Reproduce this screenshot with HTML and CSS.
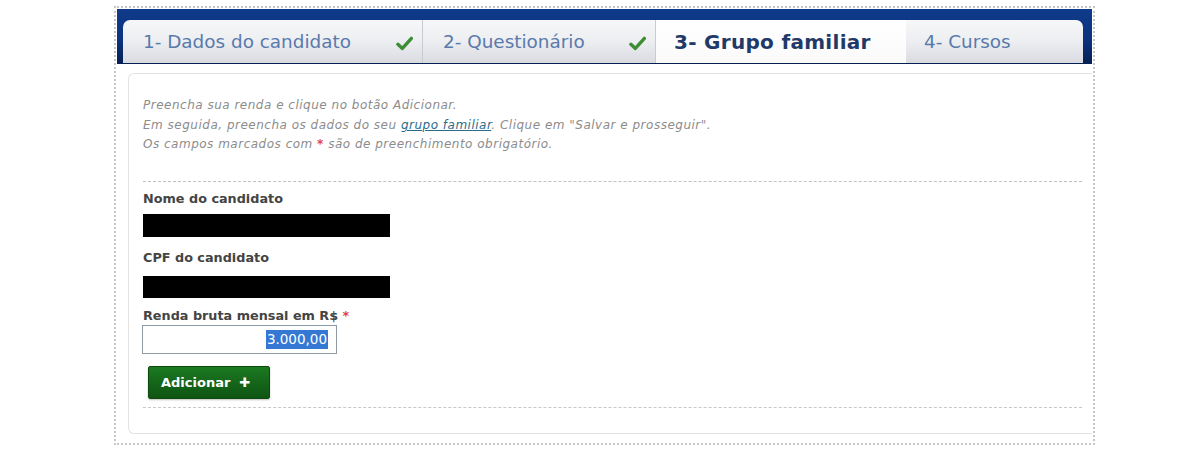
FILE: index.html
```html
<!DOCTYPE html>
<html lang="pt-BR">
<head>
<meta charset="utf-8">
<title>Grupo familiar</title>
<link rel="stylesheet" href="styles.css">
</head>
<body>
<div class="frame">
  <div class="tabbar">
    <div class="tab tab-first">
      <span class="tab-label">1- Dados do candidato</span>
      <svg class="check" viewBox="0 0 16 14" width="17" height="15"><path d="M1.8 7.8 L6 11.6 L14.5 2.2" fill="none" stroke="#3f8d36" stroke-width="3.2" stroke-linecap="round" stroke-linejoin="round"/></svg>
    </div>
    <div class="tab tab-second">
      <span class="tab-label">2- Questionário</span>
      <svg class="check" viewBox="0 0 16 14" width="17" height="15"><path d="M1.8 7.8 L6 11.6 L14.5 2.2" fill="none" stroke="#3f8d36" stroke-width="3.2" stroke-linecap="round" stroke-linejoin="round"/></svg>
    </div>
    <div class="tab tab-active">
      <span class="tab-label">3- Grupo familiar</span>
    </div>
    <div class="tab tab-last">
      <span class="tab-label">4- Cursos</span>
    </div>
  </div>
  <div class="panel">
    <div class="intro">
      <p>Preencha sua renda e clique no botão Adicionar.</p>
      <p>Em seguida, preencha os dados do seu <a href="#" class="link">grupo familiar</a>. Clique em "Salvar e prosseguir".</p>
      <p>Os campos marcados com <span class="req">*</span> são de preenchimento obrigatório.</p>
    </div>
    <div class="form">
      <div class="label">Nome do candidato</div>
      <div class="redacted redacted-1"></div>
      <div class="label">CPF do candidato</div>
      <div class="redacted redacted-2"></div>
      <div class="label">Renda bruta mensal em R$ <span class="req">*</span></div>
      <div class="input"><span class="sel">3.000,00</span></div>
      <button class="btn" type="button">Adicionar <span class="plus">✚</span></button>
    </div>
  </div>
</div>
</body>
</html>
```

FILE: styles.css
```css
* { box-sizing: border-box; }
html, body { margin: 0; padding: 0; background: #fff; }
body { font-family: "DejaVu Sans", Verdana, sans-serif; }

.frame {
  margin: 6px 0 0 114px;
  width: 981px;
  height: 439px;
  border: 2px dotted #c6c6c6;
  padding: 1px 1px 0 1px;
}

.tabbar {
  display: flex;
  height: 55px;
  padding: 11px 9px 1px 6px;
  background: linear-gradient(#0f3b8a 0%, #0c3380 55%, #061f52 100%);
}

.tab {
  display: flex;
  align-items: center;
  justify-content: space-between;
  height: 43px;
  padding: 0 9px 0 20px;
  background: linear-gradient(#f7f7f8 0%, #eceef1 50%, #d9dbe1 100%);
  border-right: 1px solid #c9cbd2;
  color: #5a7aab;
  font-size: 18.4px;
}
.tab-first { width: 300px; border-top-left-radius: 7px; }
.tab-second { width: 233px; }
.tab-active {
  width: 250px;
  background: linear-gradient(#ffffff 0%, #fafafa 100%);
  color: #1f3a68;
  font-weight: bold;
  font-size: 20px;
  letter-spacing: 0.3px;
  padding-left: 18px;
  border-right: none;
}
.tab-last { width: 177px; border-top-right-radius: 7px; border-right: none; padding-left: 18px; }
.check { margin-top: 3px; }

.panel {
  margin: 9px 0 0 11px;
  height: 361px;
  border: 1px solid #e3e3e3;
  border-right: none;
  border-radius: 6px 0 0 6px;
  padding: 22px 10px 0 14px;
}

.intro {
  color: #8c8c8c;
  font-style: italic;
  font-size: 12px;
  letter-spacing: 0.5px;
  line-height: 19.5px;
  padding-bottom: 26px;
  border-bottom: 1px dashed #c2c2c2;
}
.intro p { margin: 0; }
.link { color: #2b6c8c; text-decoration: underline; }
.req { color: #e04444; font-style: normal; font-weight: bold; }

.form {
  padding-top: 9px;
  padding-bottom: 8px;
  border-bottom: 1px dashed #c8c8c8;
}
.label {
  color: #444;
  font-weight: bold;
  font-size: 12.8px;
  line-height: 16px;
}
.redacted {
  width: 247px;
  background: #000;
  margin-top: 7px;
  margin-bottom: 13px;
  height: 23px;
}
.redacted-2 { height: 22px; margin-bottom: 10px; margin-top: 10px; }

.input {
  margin: 1px 0 0 -1px;
  width: 195px;
  height: 29px;
  border: 1px solid #8c9aa6;
  background: #fff;
  display: flex;
  align-items: center;
  justify-content: flex-end;
  padding-right: 8px;
  font-size: 13.5px;
}
.sel {
  background: #3478d4;
  color: #fff;
  line-height: 19px;
  padding: 0 1px;
}

.btn {
  display: flex;
  align-items: center;
  gap: 9px;
  margin: 12px 0 0 5px;
  width: 122px;
  height: 33px;
  padding: 0 0 0 12px;
  border: 1px solid #0e4a10;
  border-radius: 2px;
  background: linear-gradient(#1c7a22 0%, #136218 60%, #0f5513 100%);
  color: #fff;
  font-family: "DejaVu Sans", Verdana, sans-serif;
  font-weight: bold;
  font-size: 13px;
  box-shadow: 0 1px 2px rgba(0,0,0,0.25);
}
.plus { font-size: 13px; }
```
